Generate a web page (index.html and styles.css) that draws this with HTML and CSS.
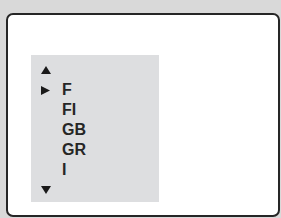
FILE: index.html
```html
<!DOCTYPE html>
<html lang="en">
<head>
  <meta charset="UTF-8">
  <title>Country list</title>
  <link rel="stylesheet" href="styles.css">
</head>
<body>

<div class="screen">
  <div class="list-panel">
    <div class="row">
      <span class="mark"><svg width="10" height="8" viewBox="0 0 10 8"><polygon points="5,0 10,8 0,8" /></svg></span>
    </div>
    <div class="row selected">
      <span class="mark"><svg width="9" height="9" viewBox="0 0 9 9"><polygon points="0,0 9,4.5 0,9" /></svg></span>
      <span class="label">F</span>
    </div>
    <div class="row"><span class="mark"></span><span class="label">FI</span></div>
    <div class="row"><span class="mark"></span><span class="label">GB</span></div>
    <div class="row"><span class="mark"></span><span class="label">GR</span></div>
    <div class="row"><span class="mark"></span><span class="label">I</span></div>
    <div class="row">
      <span class="mark"><svg width="10" height="8" viewBox="0 0 10 8"><polygon points="0,0 10,0 5,8" /></svg></span>
    </div>
  </div>
</div>

</body>
</html>
```

FILE: styles.css
```css
body {
  font-family: 'Liberation Sans', Arial, sans-serif;
  background-color: #d9d9d9;
  margin: 0;
  padding: 13px 1px 1px 6px;
}

.screen {
  height: 204px;
  background-color: #fff;
  border: 2px solid #262626;
  border-radius: 7px;
  padding: 40px 0 0 23px;
  box-sizing: border-box;
}

.list-panel {
  width: 128px;
  height: 147px;
  background-color: #dddee0;
  padding: 5px 0 0 10px;
  box-sizing: border-box;
}

.row {
  display: flex;
  align-items: center;
  height: 20px;
  font-size: 16px;
  font-weight: bold;
  color: #262626;
}

.mark {
  width: 21px;
  display: flex;
  align-items: center;
}

.mark svg {
  fill: #1a1a1a;
}

.label {
  line-height: 20px;
}
```
